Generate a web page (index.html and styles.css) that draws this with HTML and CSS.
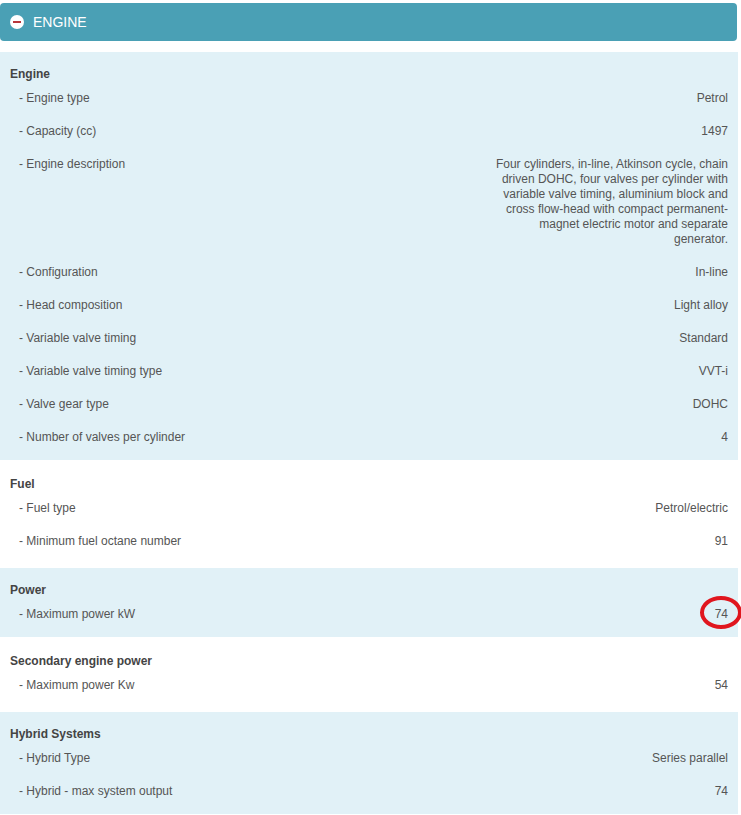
FILE: index.html
```html
<!DOCTYPE html>
<html lang="en">
<head>
  <meta charset="UTF-8" />
  <title>Engine specifications</title>
  <link rel="stylesheet" href="styles.css">
</head>
<body>
  <div class="specs">
    <div class="panel-head">
      <span class="toggle"></span>
      <span class="panel-title">ENGINE</span>
    </div>

    <div class="group">
      <div class="group-title">Engine</div>
      <div class="row"><span class="label">- Engine type</span><span class="value">Petrol</span></div>
      <div class="row"><span class="label">- Capacity (cc)</span><span class="value">1497</span></div>
      <div class="row"><span class="label">- Engine description</span><span class="value long">Four cylinders, in-line, Atkinson cycle, chain driven DOHC, four valves per cylinder with variable valve timing, aluminium block and cross flow-head with compact permanent-magnet electric motor and separate generator.</span></div>
      <div class="row"><span class="label">- Configuration</span><span class="value">In-line</span></div>
      <div class="row"><span class="label">- Head composition</span><span class="value">Light alloy</span></div>
      <div class="row"><span class="label">- Variable valve timing</span><span class="value">Standard</span></div>
      <div class="row"><span class="label">- Variable valve timing type</span><span class="value">VVT-i</span></div>
      <div class="row"><span class="label">- Valve gear type</span><span class="value">DOHC</span></div>
      <div class="row"><span class="label">- Number of valves per cylinder</span><span class="value">4</span></div>
    </div>

    <div class="group">
      <div class="group-title">Fuel</div>
      <div class="row"><span class="label">- Fuel type</span><span class="value">Petrol/electric</span></div>
      <div class="row"><span class="label">- Minimum fuel octane number</span><span class="value">91</span></div>
    </div>

    <div class="group">
      <div class="group-title">Power</div>
      <div class="row"><span class="label">- Maximum power kW</span><span class="value marked">74</span></div>
    </div>

    <div class="group">
      <div class="group-title">Secondary engine power</div>
      <div class="row"><span class="label">- Maximum power Kw</span><span class="value">54</span></div>
    </div>

    <div class="group">
      <div class="group-title">Hybrid Systems</div>
      <div class="row"><span class="label">- Hybrid Type</span><span class="value">Series parallel</span></div>
      <div class="row"><span class="label">- Hybrid - max system output</span><span class="value">74</span></div>
    </div>
  </div>
</body>
</html>
```

FILE: styles.css
```css
body {
  margin: 0;
  background-color: #fff;
  font-family: 'Liberation Sans', Arial, sans-serif;
  font-size: 12px;
  color: #555;
}
.specs {
  width: 738px;
  padding-top: 3px;
}
.panel-head {
  display: flex;
  align-items: center;
  gap: 9px;
  height: 38px;
  width: 737px;
  padding-left: 10px;
  box-sizing: border-box;
  background-color: #4aa0b5;
  border-radius: 4px;
  margin-bottom: 11px;
}
.toggle {
  position: relative;
  width: 14px;
  height: 14px;
  border-radius: 50%;
  background-color: #fff;
}
.toggle::after {
  content: "";
  position: absolute;
  left: 3px;
  top: 6px;
  width: 8px;
  height: 2px;
  background-color: #b8353a;
}
.panel-title {
  color: #fff;
  font-size: 14px;
}
.group {
  padding: 14px 10px 6px 10px;
  background-color: #e1f1f7;
}
.group:nth-child(odd) {
  padding-top: 16px;
  padding-bottom: 10px;
  background-color: #fff;
}
.group-title {
  font-weight: bold;
  line-height: 16px;
  color: #444;
}
.row {
  display: flex;
  justify-content: space-between;
  align-items: flex-start;
  padding: 9px 0 9px 9px;
  line-height: 15px;
}
.value {
  text-align: right;
}
.value.long {
  width: 240px;
}
.value.marked {
  position: relative;
}
.value.marked::after {
  content: "";
  position: absolute;
  left: -15px;
  top: -11px;
  width: 34px;
  height: 25px;
  border: 4px solid #e0161e;
  border-radius: 50%;
}
```
